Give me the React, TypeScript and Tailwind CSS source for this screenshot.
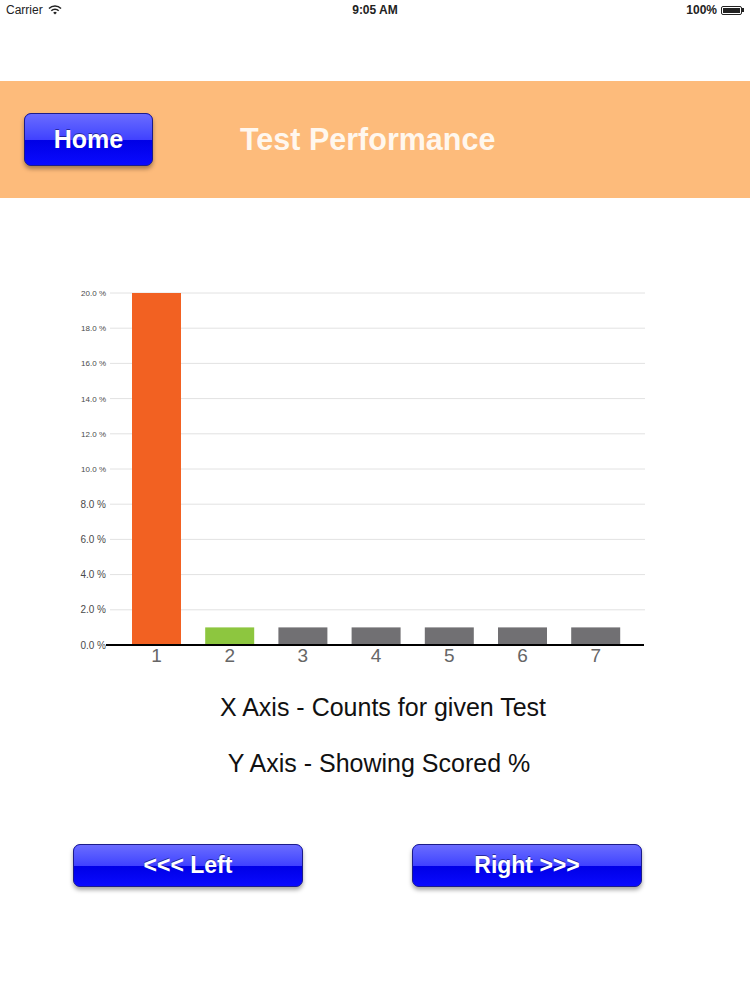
import React from "react"

const bars = [
  { n: 1, value: 20, color: "#f26122" },
  { n: 2, value: 1, color: "#8dc63f" },
  { n: 3, value: 1, color: "#717073" },
  { n: 4, value: 1, color: "#717073" },
  { n: 5, value: 1, color: "#717073" },
  { n: 6, value: 1, color: "#717073" },
  { n: 7, value: 1, color: "#717073" },
]

const ticks = [20, 18, 16, 14, 12, 10, 8, 6, 4, 2, 0]

function GlossyButton({ label, className }: { label: string; className: string }) {
  return (
    <button
      className={`relative overflow-hidden rounded-[7px] border border-[#1c1c8a] bg-[#0000f0] text-white shadow-[0_3px_4px_rgba(0,0,0,0.35)] ${className}`}
    >
      <span className="absolute inset-x-0 top-0 h-1/2 bg-gradient-to-b from-[#6b6bff] to-[#4040ff]" />
      <span className="absolute inset-x-0 bottom-0 h-1/2 bg-gradient-to-b from-[#0000e6] to-[#0a0aff]" />
      <span className="relative [text-shadow:0_-1px_0_rgba(0,0,60,0.5)]">{label}</span>
    </button>
  )
}

function Chart() {
  // plot: y 293 (20%) -> 645 (0%), page coords offset by top=280
  const top = 13
  const bottom = 365
  const y = (v: number) => bottom - ((bottom - top) * v) / 20
  return (
    <svg width="750" height="390" viewBox="0 0 750 390" className="block">
      {ticks.map((t) => (
        <g key={t}>
          {t !== 0 && <line x1="110" x2="645" y1={y(t)} y2={y(t)} stroke="#e2e2e2" strokeWidth="1" />}
          <text
            x="106"
            y={y(t) + (t <= 8 ? 3.5 : 3)}
            textAnchor="end"
            fontSize={t <= 8 ? 10 : 8}
            fill="#4a4a4a"
            fontFamily="'Liberation Sans', Arial, sans-serif"
          >
            {t.toFixed(1)} %
          </text>
        </g>
      ))}
      {bars.map((b, i) => {
        const x = 132 + i * 73.2
        return (
          <g key={b.n}>
            <rect x={x} y={y(b.value)} width="49" height={bottom - y(b.value)} fill={b.color} />
            <text
              x={x + 24.5}
              y="382"
              textAnchor="middle"
              fontSize="19"
              fill="#666"
              fontFamily="'Liberation Sans', Arial, sans-serif"
            >
              {b.n}
            </text>
          </g>
        )
      })}
      <line x1="106" x2="644" y1={bottom} y2={bottom} stroke="#000" strokeWidth="2" />
    </svg>
  )
}

export default function App() {
  return (
    <div className="w-[750px] h-[1000px] bg-white font-['Liberation_Sans',Arial,sans-serif] text-black">
      {/* Status bar */}
      <div className="flex h-5 items-center justify-between px-[6px] text-[12px] text-[#222]">
        <div className="flex w-[120px] items-center gap-[5px]">
          <span>Carrier</span>
          <svg width="14" height="10" viewBox="0 0 14 10">
            <path d="M1 3.5 A8.5 8.5 0 0 1 13 3.5" fill="none" stroke="#222" strokeWidth="1.6" />
            <path d="M3.3 5.7 A5.3 5.3 0 0 1 10.7 5.7" fill="none" stroke="#222" strokeWidth="1.6" />
            <path d="M7 9.5 L5.2 7.7 A2.6 2.6 0 0 1 8.8 7.7 Z" fill="#222" />
          </svg>
        </div>
        <span className="font-bold">9:05 AM</span>
        <div className="flex w-[120px] items-center justify-end gap-[4px]">
          <span className="font-bold">100%</span>
          <div className="flex items-center">
            <div className="h-[9px] w-[21px] rounded-[2px] border border-[#222] p-[1px]">
              <div className="h-full w-full bg-[#222]" />
            </div>
            <div className="h-[4px] w-[2px] bg-[#222]" />
          </div>
        </div>
      </div>

      {/* Header */}
      <div className="mt-[61px] flex h-[117px] items-center bg-[#fdbb7b] pl-6">
        <GlossyButton label="Home" className="h-[53px] w-[129px] text-[25px] font-semibold" />
        <h1 className="ml-[87px] text-[30.5px] font-bold text-[#fff7ee]">Test Performance</h1>
      </div>

      {/* Chart */}
      <div className="mt-[82px]">
        <Chart />
      </div>

      <p className="mt-[23px] pl-[16px] text-center text-[25px] leading-[28px] text-[#111]">X Axis - Counts for given Test</p>
      <p className="mt-[28px] pl-[8px] text-center text-[25px] leading-[28px] text-[#111]">Y Axis - Showing Scored %</p>

      <div className="mt-[67px] flex pl-[73px]">
        <GlossyButton label="<<< Left" className="h-[43px] w-[230px] text-[23px] font-semibold" />
        <GlossyButton label="Right >>>" className="ml-[109px] h-[43px] w-[230px] text-[23px] font-semibold" />
      </div>
    </div>
  )
}
